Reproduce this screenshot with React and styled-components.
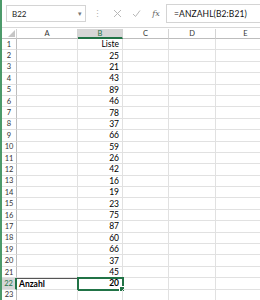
import styled, { createGlobalStyle } from "styled-components";

const GlobalStyle = createGlobalStyle`
  body {
    margin: 0;
    background: #ffffff;
    font-family: "Lato", "Liberation Sans", sans-serif;
  }
`;

const values = [25, 21, 43, 89, 46, 78, 37, 66, 59, 26, 42, 16, 19, 23, 75, 87, 60, 66, 37, 45];
const cols = ["A", "B", "C", "D", "E"];

const App = () => {
  // row 1 is the header "Liste", rows 2-21 the list, row 22 the count
  const rows = [];
  rows.push({ n: 1, a: "", b: "Liste" });
  values.forEach((v, i) => rows.push({ n: i + 2, a: "", b: String(v) }));
  rows.push({ n: 22, a: "Anzahl", b: "20", total: true });
  rows.push({ n: 23, a: "", b: "" });

  return (
    <Wrapper>
      <GlobalStyle />
      <FormulaBar>
        <NameBox>
          <span>B22</span>
          <Caret>▾</Caret>
        </NameBox>
        <Dots>⋮</Dots>
        <BarIcon>
          <svg width="9" height="9" viewBox="0 0 9 9">
            <path d="M1 1L8 8M8 1L1 8" stroke="#b8b8b8" strokeWidth="1" />
          </svg>
        </BarIcon>
        <BarIcon>
          <svg width="9" height="9" viewBox="0 0 9 9">
            <path d="M1 5L3.5 7.5L8 1.5" stroke="#b8b8b8" strokeWidth="1" fill="none" />
          </svg>
        </BarIcon>
        <Fx>fx</Fx>
        <FormulaInput>=ANZAHL(B2:B21)</FormulaInput>
      </FormulaBar>
      <Sheet>
        <Corner>
          <svg width="7" height="7" viewBox="0 0 7 7">
            <path d="M7 0V7H0Z" fill="#c6c6c6" />
          </svg>
        </Corner>
        {cols.map((c) => (
          <ColHead key={c} active={c === "B"}>
            {c}
          </ColHead>
        ))}
        {rows.map((r) => (
          <Row key={r.n} r={r} />
        ))}
      </Sheet>
    </Wrapper>
  );
};

const Row = ({ r }) => (
  <>
    <RowHead active={r.total}>{r.n}</RowHead>
    <Cell bold={r.total} topLine={r.total}>
      {r.a}
    </Cell>
    <Cell right bold={r.total} selected={r.total}>
      {r.b}
      {r.total && <Handle />}
    </Cell>
    <Cell />
    <Cell />
    <Cell />
  </>
);

export default App;

const Wrapper = styled.div`
  width: 260px;
  height: 300px;
  overflow: hidden;
  border-left: 2px solid #4c9a6a;
  box-sizing: border-box;
  background: #ffffff;
`;

const FormulaBar = styled.div`
  display: flex;
  align-items: center;
  height: 28px;
  padding-left: 4px;
  background: #ffffff;
  border-bottom: 1px solid #d8d8d8;
  box-sizing: border-box;
`;

const NameBox = styled.div`
  display: flex;
  align-items: center;
  justify-content: space-between;
  width: 80px;
  height: 17px;
  padding: 0 3px 0 5px;
  box-sizing: border-box;
  border: 1px solid #d4d4d4;
  font-size: 8px;
  color: #222;
`;

const Caret = styled.span`
  font-size: 7px;
  color: #777;
`;

const Dots = styled.div`
  width: 22px;
  text-align: center;
  font-size: 9px;
  color: #b0b0b0;
`;

const BarIcon = styled.div`
  width: 19px;
  display: flex;
  justify-content: center;
`;

const Fx = styled.div`
  width: 20px;
  text-align: center;
  font-family: "DejaVu Serif", serif;
  font-style: italic;
  font-size: 8px;
  color: #666;
`;

const FormulaInput = styled.div`
  flex: 1;
  height: 17px;
  display: flex;
  align-items: center;
  padding-left: 7px;
  border: 1px solid #d4d4d4;
  border-right: none;
  font-size: 8.5px;
  color: #111;
  letter-spacing: 0.1px;
`;

const Sheet = styled.div`
  display: grid;
  grid-template-columns: 15px 61px 45px 46px 47px 60px;
  grid-auto-rows: 11.4px;
  grid-template-rows: 10px;
  margin-top: 1px;
`;

const Corner = styled.div`
  background: #ffffff;
  border-right: 1px solid #d4d4d4;
  border-bottom: 1px solid #bdbdbd;
  display: flex;
  align-items: flex-end;
  justify-content: flex-end;
  padding: 0 1px 1px 0;
`;

const ColHead = styled.div`
  display: flex;
  align-items: center;
  justify-content: center;
  font-size: 7.5px;
  color: ${(p) => (p.active ? "#217346" : "#333")};
  background: ${(p) => (p.active ? "#d6d6d6" : "#ffffff")};
  border-right: 1px solid #d4d4d4;
  border-bottom: ${(p) => (p.active ? "2px solid #217346" : "1px solid #bdbdbd")};
  box-sizing: border-box;
`;

const RowHead = styled.div`
  display: flex;
  align-items: center;
  justify-content: center;
  font-size: 7.5px;
  color: ${(p) => (p.active ? "#217346" : "#333")};
  background: ${(p) => (p.active ? "#d6d6d6" : "#ffffff")};
  border-right: ${(p) => (p.active ? "2px solid #217346" : "1px solid #bdbdbd")};
  border-bottom: 1px solid #e1e1e1;
  box-sizing: border-box;
`;

const Cell = styled.div`
  position: relative;
  display: flex;
  align-items: center;
  justify-content: ${(p) => (p.right ? "flex-end" : "flex-start")};
  padding: 0 3px 0 2px;
  font-size: 8.5px;
  font-weight: ${(p) => (p.bold ? 700 : 400)};
  color: #000;
  border-right: 1px solid #e1e1e1;
  border-bottom: 1px solid #e1e1e1;
  border-top: ${(p) => (p.topLine ? "1px solid #555" : "none")};
  outline: ${(p) => (p.selected ? "2px solid #217346" : "none")};
  outline-offset: -1px;
  box-sizing: border-box;
  white-space: nowrap;
`;

const Handle = styled.span`
  position: absolute;
  right: -3px;
  bottom: -3px;
  width: 4px;
  height: 4px;
  background: #217346;
  border: 1px solid #ffffff;
`;
